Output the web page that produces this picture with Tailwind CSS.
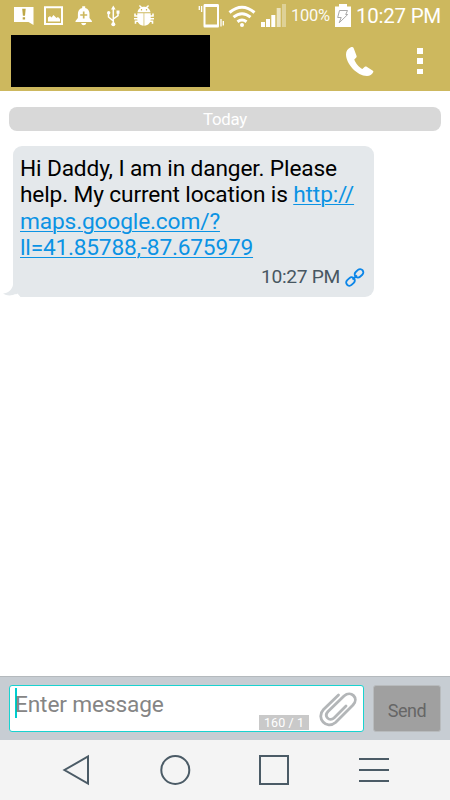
<!DOCTYPE html>
<html lang="en">
<head>
<meta charset="utf-8">
<title>Messages</title>
<script src="https://cdn.jsdelivr.net/npm/@tailwindcss/browser@4"></script>
</head>
<body class="bg-white">
<div class="flex h-[800px] w-[450px] flex-col overflow-hidden bg-white font-['Roboto',sans-serif]">
  <header class="h-[91px] shrink-0 bg-[#cdb85e] text-white">
    <div class="flex h-8 items-center pl-[14px]">
      <svg class="h-8 w-5 shrink-0" viewBox="14 0 20 32"><path fill="#fff" d="M14 7h19.500v18l-5-3H14z"/><path fill="#bda747" d="M22.200 8.700h3.500l-.7 7h-2.100zM22.700 17.200h2.400v2.200h-2.400z"/></svg>
      <svg class="ml-[10px] h-8 w-[19px] shrink-0" viewBox="44 0 19 32"><path fill="#fff" fill-rule="evenodd" d="M44 6.300h19V25H44zM46 8.300V23h15V8.300z"/><path fill="#fff" d="M48 21.500v-4l2-1.500 1.500 1.500 2-2.500 3 3 1.500-1 2 2v2.500z"/></svg>
      <svg class="ml-[12px] h-8 w-[17px] shrink-0" viewBox="75 0 17 32"><path fill="#fff" d="M82.200 8V6.200h3V8c3.100.8 4.300 3 4.300 6v4l2.400 3v1H75.500v-1l2.400-3v-4c0-3 1.200-5.200 4.300-6zM81.200 23h5c-.4 3-4.600 3-5 0z"/><path stroke="#cdb85e" stroke-width="1.700" d="M83.700 11.500v7M80.200 15h7"/></svg>
      <svg class="ml-[15px] h-8 w-[13px] shrink-0" viewBox="107 0 13 32"><g fill="none" stroke="#fff" stroke-width="1.500"><path d="M113.300 8v16M108.500 13v4l4.800 4M118 13v2.500l-4.700 3.500"/></g><g fill="#fff"><path d="M113.300 5.500l2.300 4H111z"/><circle cx="113.300" cy="24.200" r="2"/><circle cx="108.700" cy="12.700" r="1.700"/><path d="M116.500 10.500h3v3.200h-3z"/></g></svg>
      <svg class="ml-[14px] h-8 w-5 shrink-0" viewBox="134 0 20 32"><path fill="#fff" d="M137.500 12.200c.3-2.200 1.500-3.700 3-4.500L139 6l.9-.9 2.100 2c1.300-.4 2.700-.4 4 0l2.100-2 .9.900-1.500 1.700c1.500.8 2.700 2.300 3 4.500zM137.300 13.300h6.300v12.400c-4-.3-6.300-3-6.300-6.700zM144.300 13.300h6.400v5.700c0 3.700-2.200 6.400-6.400 6.700z"/><path fill="none" stroke="#fff" stroke-width="1.600" d="M138 16h-3v-2.500M138 18.700h-4M138 21.200h-2.500v2.500M150 16h3v-2.500M150 18.700h4M150 21.200h2.500v2.500"/><path stroke="#cdb85e" stroke-width="1.200" d="M141.500 9v1.400M146.500 9v1.400"/></svg>
      <svg class="ml-[44px] h-8 w-[27px] shrink-0" viewBox="198 0 27 32"><path fill="#fff" fill-rule="evenodd" d="M204.500 4h13.500q1 0 1 1.500V26q0 1.500-1 1.500h-13.500q-1 0-1-1.500V5.500q0-1.500 1-1.500zM205.500 7v17.500h11.500V7z"/><path fill="none" stroke="#fff" stroke-width="1.300" d="M199.300 6v4M201.600 6v6M221 19v7.500M223.300 21v4.500"/></svg>
      <svg class="ml-[3px] h-8 w-7 shrink-0" viewBox="228 0 28 32"><g fill="none" stroke="#fff" stroke-width="3"><path d="M229.500 12.500q12.500-10.500 25 0"/><path d="M233.500 17.200q8.500-7 17 0"/><path d="M237.500 21.700q4.500-3.500 9 0"/></g><circle cx="242" cy="25" r="2" fill="#fff"/></svg>
      <svg class="ml-[5px] h-8 w-[26px] shrink-0" viewBox="261 0 26 32"><path fill="#fff" d="M261 22h4v5h-4zM266 19h4v8h-4zM271.300 15h4v12h-4z"/><path fill="#fff" fill-opacity=".6" d="M276.700 8h4v19h-4z"/><path fill="#fff" fill-opacity=".35" d="M282 4h4v23h-4z"/></svg>
      <span class="ml-[4px] w-[41px] shrink-0 text-[16.500px] leading-[34px] tracking-[-0.25px] text-white/95">100%</span>
      <svg class="ml-[3px] h-8 w-4 shrink-0" viewBox="335 0 16 32"><path fill="#fff" d="M339 4h8v2.500h4V27h-16V6.500h4z"/><path fill="#fff" stroke="#a9a9a9" stroke-width="1" d="M339.500 10.500h8l-1.800 4h2l-8.500 8.300 2-5.300h-3.500z"/></svg>
      <span class="ml-[5px] whitespace-nowrap text-[20.500px] leading-8 tracking-[-0.25px]">10:27 PM</span>
    </div>
    <div class="flex pl-[11px] pt-[3px]">
      <div class="h-[52px] w-[199px] bg-black"></div>
      <svg class="ml-[135px] h-[52px] w-[30px]" viewBox="345 35 30 52"><path fill="#fff" d="M350.800 47.200c-3 1.300-4.800 3.800-4.800 7.300 0 9 11 21.500 21 21.500 2.800 0 5-1.500 6.300-4 .2-.5 0-.9-.4-1.200l-6.600-4.200c-.5-.3-1-.2-1.500.2l-2.500 2.200c-3.300-1.700-6.800-5.800-8-9.500l2-2c.4-.4.5-.9.300-1.400l-3-8.200c-.3-.8-1.300-1.200-2.800-.7z"/></svg>
      <div class="ml-[42px] mt-[13px] flex flex-col gap-[4px]"><i class="h-[6px] w-[6px] bg-white"></i><i class="h-[6px] w-[6px] bg-white"></i><i class="mt-[1px] h-[5px] w-[6px] bg-white"></i></div>
    </div>
  </header>

  <main class="flex-1 pt-4">
    <div class="ml-[9px] h-6 w-[432px] rounded-[8px] bg-[#d8d8d8] text-center text-[16.800px] leading-[25px] tracking-[-0.2px] text-white">Today</div>
    <div class="relative ml-[13px] mt-[15px] h-[151px] w-[361px] rounded-[9px] bg-[#e4e8eb] pl-[7px] pt-[10px]">
      <svg class="absolute left-[-10px] top-[130px] h-[21px] w-[20px]" viewBox="3 276 20 21"><path fill="#e4e8eb" d="M13 276v9c-1 5-5 8-10 8.600 4 2.800 9 2.400 13.500 0l3 3.400h3.500v-21z"/><path fill="#fff" d="M11 297v-1.200c3-.3 5-1.300 6.500-2.300l3 3.500z"/></svg>
      <p class="whitespace-nowrap text-[22.700px] leading-[26.300px] tracking-[-0.14px] text-black">Hi Daddy, I am in danger. Please<br>help. My current location is <a class="text-[#0b93e4] underline decoration-1 underline-offset-[2px]">http://<br>maps.google.com/?<br><span class="tracking-[-0.2px]">ll=41.85788,-87.675979</span></a></p>
      <div class="flex items-center justify-end pr-[9px] pt-[4px] text-[19.200px] leading-6 tracking-[-0.3px] text-[#485761]">10:27 PM
        <svg class="ml-[5px] h-[19px] w-5" viewBox="0 0 20 19"><g fill="none" stroke="#0c86e8" stroke-width="1.900"><rect x="-4.700" y="-3.200" width="9.400" height="6.400" rx="3.200" transform="translate(14 5.300) rotate(-42)"/><rect x="-4.700" y="-3.200" width="9.400" height="6.400" rx="3.200" transform="translate(5.500 13.500) rotate(-42)"/><path d="M7.500 11.500l4.500-4"/></g></svg>
      </div>
    </div>
  </main>

  <section class="flex h-[64px] shrink-0 border-t border-[#b4b9bd] bg-[#c7cdd3] pl-[9px] pt-[8px]">
    <div class="relative h-[47px] w-[355px] rounded-[3px] border border-[#19d3d0] bg-white">
      <div class="flex items-start pl-[5px] pt-[2px]"><i class="h-[30px] w-[2px] bg-[#00cdd0]"></i><span class="ml-[-2px] text-[22.700px] leading-[33px] tracking-[-0.15px] text-[#858585]">Enter message</span></div>
      <div class="absolute left-[249px] top-[29px] h-[15px] w-[50px] bg-[#c9c9c9] text-center text-[12.500px] leading-[15px] tracking-[.1px] text-white">160 / 1</div>
      <svg class="absolute left-[308px] top-[5px] h-9 w-[40px]" viewBox="318 691 40 36"><path fill="none" stroke="#b3b6b8" stroke-width="2.800" stroke-linecap="round" stroke-linejoin="round" d="M338.500 695l-15 14.500c-8 8.500 3 20.500 12 13l17.500-17.500c6.500-7-2-15-9-9l-16 15.500c-4.500 5 1.500 10.500 6 6.500l12-12"/></svg>
    </div>
    <button class="ml-[9px] h-[47px] w-[68px] rounded-[3px] border border-[#b8bbbd] bg-[#a0a0a0] pt-[3px] text-[18px] tracking-[-0.4px] text-[#666]">Send</button>
  </section>
  <nav class="h-[60px] shrink-0 bg-[#f4f4f4]">
    <div class="flex h-[60px] items-center pl-[62px]">
      <svg class="h-8 w-7" viewBox="0 0 28 32"><path fill="none" stroke="#4b5b66" stroke-width="2" d="M26 2.500v27L2.500 16z"/></svg>
      <svg class="ml-[69px] h-8 w-8" viewBox="0 0 32 32"><circle cx="16.300" cy="16" r="14" fill="none" stroke="#4b5b66" stroke-width="2"/></svg>
      <div class="ml-[68px] h-[30px] w-[30px] border-2 border-[#4b5b66]"></div>
      <div class="ml-[70px] flex flex-col gap-[9px]"><i class="h-[2px] w-[30px] bg-[#4b5b66]"></i><i class="h-[2px] w-[30px] bg-[#4b5b66]"></i><i class="h-[2px] w-[30px] bg-[#4b5b66]"></i></div>
    </div>
  </nav>
</div>
</body>
</html>
